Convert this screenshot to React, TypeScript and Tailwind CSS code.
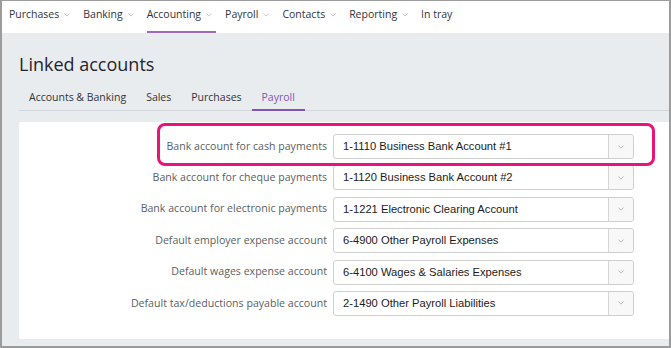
import React from "react";

const navItems = [
  { label: "Purchases", chevron: true },
  { label: "Banking", chevron: true },
  { label: "Accounting", chevron: true, active: true },
  { label: "Payroll", chevron: true },
  { label: "Contacts", chevron: true },
  { label: "Reporting", chevron: true },
  { label: "In tray", chevron: false },
];

const tabs = [
  { label: "Accounts & Banking" },
  { label: "Sales" },
  { label: "Purchases" },
  { label: "Payroll", active: true },
];

const rows = [
  { label: "Bank account for cash payments", value: "1-1110 Business Bank Account #1" },
  { label: "Bank account for cheque payments", value: "1-1120 Business Bank Account #2" },
  { label: "Bank account for electronic payments", value: "1-1221 Electronic Clearing Account" },
  { label: "Default employer expense account", value: "6-4900 Other Payroll Expenses" },
  { label: "Default wages expense account", value: "6-4100 Wages & Salaries Expenses" },
  { label: "Default tax/deductions payable account", value: "2-1490 Other Payroll Liabilities" },
];

function Chevron({ className, w = 7, h = 4 }: { className?: string; w?: number; h?: number }) {
  return (
    <svg width={w} height={h} viewBox="0 0 8 5" className={className} fill="none">
      <path d="M0.5 0.5 L4 4 L7.5 0.5" stroke="currentColor" strokeWidth="1" />
    </svg>
  );
}

export default function App() {
  return (
    <div
      className="w-[671px] h-[348px] bg-[#e9ecef] border-l-2 border-r-2 border-t border-b-2 border-[#9c9c9c] relative overflow-hidden"
      style={{ fontFamily: "'Open Sans', 'Noto Sans', sans-serif" }}
    >
      <nav className="h-[32px] bg-white flex items-stretch pl-[7px]">
        {navItems.map((n) => (
          <div
            key={n.label}
            className={`flex items-center gap-[5px] pr-[4px] mr-[9px] pb-[3px] text-[10.5px] text-[#2f3440] border-b-2 ${
              n.active ? "border-[#9b6cc2]" : "border-transparent"
            }`}
          >
            <span>{n.label}</span>
            {n.chevron && <Chevron className="text-[#b5b5b5] mt-[1px]" w={6} h={4} />}
          </div>
        ))}
      </nav>
      <div className="pl-[17px]">
        <h1 className="text-[18px] leading-[26px] text-[#1f2430] mt-[18px] font-normal">Linked accounts</h1>
        <div className="flex border-b border-[#d3d7db] mt-[9px] h-[25px]">
          {tabs.map((t) => (
            <div
              key={t.label}
              className={`px-[10px] text-[10.5px] leading-[22px] -mb-px border-b-2 ${
                t.active ? "text-[#8454b4] border-[#7f54b3]" : "text-[#2f3440] border-transparent"
              }`}
            >
              {t.label}
            </div>
          ))}
        </div>
        <div className="bg-white mt-[11px] h-[217px] rounded-l-[2px] pt-[12px] relative">
          <div className="flex flex-col gap-[6.4px]">
            {rows.map((r) => (
              <div key={r.label} className="flex items-center h-[25px]">
                <div className="w-[314px] text-right pr-[6px] text-[10.6px] text-[#5a5f66]">{r.label}</div>
                <div className="w-[301px] h-[25px] flex border border-[#cfcfcf] rounded-[3px] bg-white">
                  <div
                    className="flex-1 flex items-center pl-[9px] text-[11.2px] text-[#1c1c1c]"
                    style={{ fontFamily: "'Liberation Sans', Arial, sans-serif" }}
                  >
                    {r.value}
                  </div>
                  <div className="w-[25px] border-l border-[#d6d6d6] bg-[#f8f8f8] rounded-r-[3px] flex items-center justify-center">
                    <Chevron className="text-[#a8a8a8]" w={6} h={4} />
                  </div>
                </div>
              </div>
            ))}
          </div>
        </div>
      </div>
      <div className="absolute left-[155px] top-[122px] w-[498px] h-[43px] border-[3px] border-[#e8137b] rounded-[8px] pointer-events-none" />
    </div>
  );
}
